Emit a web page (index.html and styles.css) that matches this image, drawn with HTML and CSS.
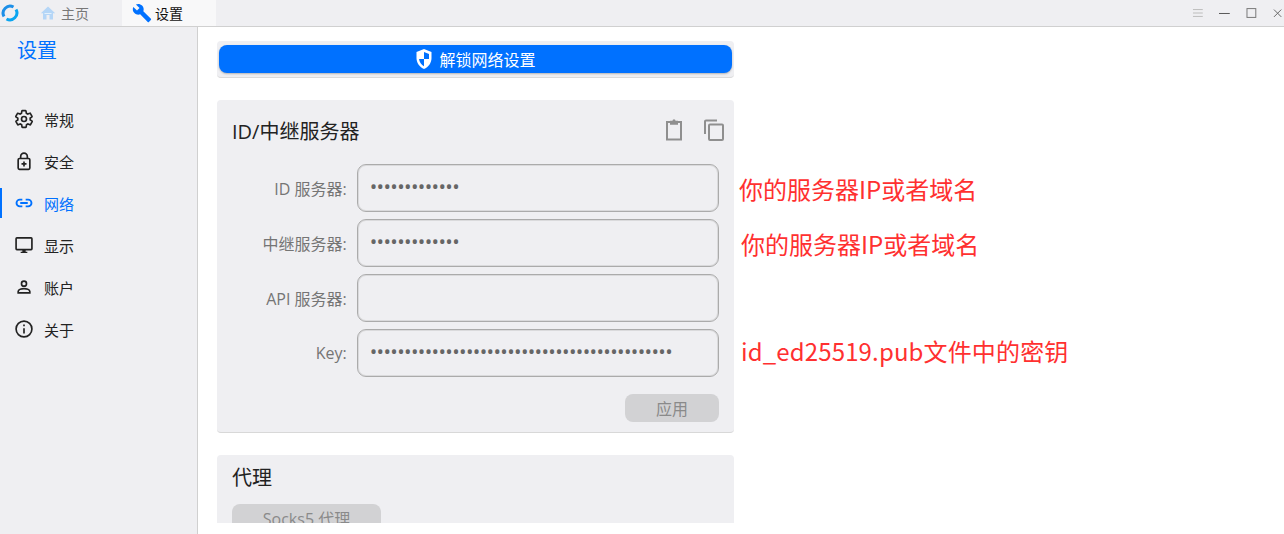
FILE: index.html
```html
<!DOCTYPE html>
<html lang="zh-CN">

<head>
    <meta charset="UTF-8">
    <title>设置</title>
    <link rel="stylesheet" href="styles.css">
</head>

<body>
    <div class="titlebar">
        <svg class="logo" viewBox="0 0 18 18" width="18" height="18">
            <path d="M3 12.500A7 7 0 0 1 12.500 3" fill="none" stroke="#1c8fe8" stroke-width="3"/>
            <path d="M15 5.500A7 7 0 0 1 5.500 15" fill="none" stroke="#0aa5f0" stroke-width="3"/>
        </svg>
        <div class="tab">
            <svg viewBox="0 0 16 16" width="16" height="16">
                <path d="M8 1.500 .8 8.200h2.200V14.500h3.500V10h3v4.500H13V8.200h2.200z" fill="#b5d6f7"/>
                <path d="M4.500 8.500h7" stroke="#e4f0fb" stroke-width="1"/>
            </svg>
            <span>主页</span>
        </div>
        <div class="tab tab-active">
            <svg viewBox="0 0 24 24" width="20" height="20">
                <path d="M22.700 19 13.600 9.900c.9-2.300.4-5-1.500-6.900-2-2-5-2.400-7.400-1.300L9 6 6 9 1.600 4.700C.4 7.100.9 10.100 2.900 12.100c1.900 1.900 4.600 2.400 6.900 1.500l9.100 9.100c.4.400 1 .4 1.400 0l2.300-2.300c.5-.4.5-1.100.1-1.400z" fill="#0071ff"/>
            </svg>
            <span>设置</span>
        </div>
        <div class="window-btns">
            <svg viewBox="0 0 12 12" width="12" height="12"><path d="M1 2.500h10M1 6h10M1 9.500h10" stroke="#bbb" stroke-width="1"/></svg>
            <svg viewBox="0 0 12 12" width="12" height="12"><path d="M0 6.500h11" stroke="#555" stroke-width="1"/></svg>
            <svg viewBox="0 0 12 12" width="12" height="12"><rect x="1" y="1.500" width="9" height="9" fill="none" stroke="#777" stroke-width="1"/></svg>
            <svg viewBox="0 0 12 12" width="12" height="12"><path d="M2 2.500l7.500 7.500M9.500 2.500l-7.500 7.500" stroke="#666" stroke-width="1"/></svg>
        </div>
    </div>

    <div class="layout">
        <div class="sidebar">
            <div class="sidebar-title">设置</div>
            <div class="nav">
                <div class="nav-item">
                    <svg viewBox="0 0 24 24" width="20" height="20"><path d="M19.400 13c.04-.3.1-.7.1-1s0-.7-.1-1l2.100-1.600c.2-.2.200-.4.100-.6l-2-3.500c-.1-.2-.4-.3-.6-.2l-2.500 1c-.5-.4-1.100-.7-1.700-1l-.4-2.700c0-.2-.2-.4-.5-.4h-4c-.2 0-.4.200-.5.400l-.4 2.700c-.6.300-1.200.6-1.700 1l-2.500-1c-.2-.1-.5 0-.6.200l-2 3.500c-.1.200-.1.400.1.600L4.600 11c0 .3-.1.700-.1 1s0 .7.100 1l-2.100 1.600c-.2.200-.2.400-.1.600l2 3.500c.1.200.4.300.6.200l2.500-1c.5.400 1.100.7 1.700 1l.4 2.700c0 .2.300.4.500.4h4c.3 0 .5-.2.500-.4l.4-2.700c.6-.3 1.200-.6 1.700-1l2.500 1c.2.100.5 0 .6-.2l2-3.500c.1-.2.100-.4-.1-.6z" fill="none" stroke="#222" stroke-width="2"/><circle cx="12" cy="12" r="3" fill="none" stroke="#222" stroke-width="2"/></svg>
                    <span>常规</span>
                </div>
                <div class="nav-item">
                    <svg viewBox="0 0 24 24" width="20" height="20"><rect x="5" y="9" width="14" height="13" rx="1.500" fill="none" stroke="#222" stroke-width="2"/><path d="M8 9V6.500a4 4 0 0 1 8 0V9M12 12.500v6M9 15.500h6" fill="none" stroke="#222" stroke-width="2"/></svg>
                    <span>安全</span>
                </div>
                <div class="nav-item nav-active">
                    <svg viewBox="0 0 24 24" width="20" height="20"><path d="M10 8H7a4 4 0 0 0 0 8h3M14 8h3a4 4 0 0 1 0 8h-3M7.500 12h9" fill="none" stroke="#0071ff" stroke-width="2.200"/></svg>
                    <span>网络</span>
                </div>
                <div class="nav-item">
                    <svg viewBox="0 0 24 24" width="22" height="22"><rect x="2.500" y="3.500" width="19" height="14" rx="1" fill="none" stroke="#222" stroke-width="2"/><path d="M10 18h4v2h2v1.500H8V20h2z" fill="#222"/></svg>
                    <span>显示</span>
                </div>
                <div class="nav-item">
                    <svg viewBox="0 0 24 24" width="20" height="20"><circle cx="12" cy="8" r="3" fill="none" stroke="#222" stroke-width="2"/><path d="M5 19v-1.500c0-2.500 4.500-3.500 7-3.500s7 1 7 3.500V19z" fill="none" stroke="#222" stroke-width="2"/></svg>
                    <span>账户</span>
                </div>
                <div class="nav-item">
                    <svg viewBox="0 0 24 24" width="20" height="20"><circle cx="12" cy="12" r="9.500" fill="none" stroke="#222" stroke-width="2"/><path d="M12 11v6.500M12 6.500v2.200" fill="none" stroke="#222" stroke-width="2"/></svg>
                    <span>关于</span>
                </div>
            </div>
        </div>

        <div class="main">
            <div class="scroll">
                <div class="unlock-panel">
                    <div class="unlock-btn">
                        <svg viewBox="0 0 18 22" width="18" height="22"><path d="M9 1 1.500 4v6c0 5 3.200 9.300 7.500 11 4.300-1.700 7.500-6 7.500-11V4z" fill="#fff"/><path d="M9 4v7H4V6zM9 11h5c-.4 3.300-2.400 5.900-5 7.200z" fill="#0071ff" transform="matrix(-1 0 0 1 18 0)"/></svg>
                        <span>解锁网络设置</span>
                    </div>
                </div>

                <div class="card">
                    <div class="card-head">
                        <div class="card-title">ID/中继服务器</div>
                        <div class="card-actions">
                            <svg viewBox="0 0 20 24" width="20" height="24"><path d="M6 4H3v17.500h14V4h-3" fill="none" stroke="#8f8f8f" stroke-width="2"/><path d="M6 2.800h2.500a1.500 1.500 0 0 1 3 0H14v4H6z" fill="#8f8f8f"/></svg>
                            <svg viewBox="0 0 22 24" width="22" height="24"><path d="M2 16V3.500a1 1 0 0 1 1-1h11" fill="none" stroke="#8f8f8f" stroke-width="2"/><rect x="6" y="6.500" width="14" height="15.500" rx="1" fill="none" stroke="#8f8f8f" stroke-width="2"/></svg>
                        </div>
                    </div>
                    <div class="form-row">
                        <label class="form-label">ID 服务器:</label>
                        <div class="form-input">•••••••••••••</div>
                    </div>
                    <div class="form-row">
                        <label class="form-label">中继服务器:</label>
                        <div class="form-input">•••••••••••••</div>
                    </div>
                    <div class="form-row">
                        <label class="form-label">API 服务器:</label>
                        <div class="form-input"></div>
                    </div>
                    <div class="form-row">
                        <label class="form-label">Key:</label>
                        <div class="form-input">••••••••••••••••••••••••••••••••••••••••••••</div>
                    </div>
                    <div class="card-foot">
                        <div class="btn-disabled btn-apply">应用</div>
                    </div>
                </div>

                <div class="card">
                    <div class="card-title card-title-small">代理</div>
                    <div class="btn-disabled btn-socks">Socks5 代理</div>
                </div>
            </div>
        </div>
    </div>

    <div class="note note-id">你的服务器IP或者域名</div>
    <div class="note note-relay">你的服务器IP或者域名</div>
    <div class="note note-key">id_ed25519.pub文件中的密钥</div>
</body>

</html>
```

FILE: styles.css
```css
* {
    box-sizing: border-box;
}

html,
body {
    height: 100%;
}

body {
    margin: 0;
    background-color: #FFFFFF;
    color: #222222;
    font-family: "Open Sans", "Noto Sans CJK SC", sans-serif;
    font-size: 14px;
    overflow: hidden;
    position: relative;
}

.titlebar {
    display: flex;
    align-items: center;
    height: 27px;
    background-color: #EFEFF2;
    border-bottom: 1px solid #D0D0D0;
}

.logo {
    margin-left: 1px;
    margin-right: 21px;
    flex-shrink: 0;
}

.tab {
    display: flex;
    align-items: center;
    gap: 5px;
    width: 82px;
    height: 26px;
    color: #777777;
}

.tab-active {
    width: 94px;
    padding-left: 10px;
    gap: 3px;
    background-color: #F8F8F9;
    color: #111111;
}

.window-btns {
    display: flex;
    align-items: center;
    gap: 15px;
    margin-left: auto;
    width: 92px;
    flex-shrink: 0;
}

.layout {
    display: flex;
    height: 507px;
}

.sidebar {
    width: 198px;
    flex-shrink: 0;
    background-color: #EFEFF2;
    border-right: 1px solid #D0D0D0;
}

.sidebar-title {
    padding: 10px 0 0 17px;
    height: 71px;
    font-size: 20px;
    line-height: 28px;
    color: #0071FF;
}

.nav-item {
    display: flex;
    align-items: center;
    height: 42px;
    padding-left: 14px;
    gap: 10px;
    font-size: 15px;
}

.nav-item svg {
    width: 20px;
    flex-shrink: 0;
}

.nav-active {
    color: #0071FF;
    background: linear-gradient(#0071FF, #0071FF) 0 center / 2px 30px no-repeat;
}

.main {
    flex: 1;
}

.scroll {
    height: 496px;
    width: 536px;
    padding: 14px 0 0 19px;
    overflow: hidden;
}

.unlock-panel {
    width: 517px;
    height: 37px;
    padding: 4px 2px 0;
    background-color: #EFEFF2;
    border-radius: 4px;
    border-bottom: 1px solid #DADADA;
}

.unlock-btn {
    display: flex;
    align-items: center;
    justify-content: center;
    gap: 6px;
    height: 28px;
    padding-bottom: 1px;
    background-color: #0071FF;
    border-radius: 8px;
    box-shadow: 0 1px 2px rgba(0, 0, 0, 0.25);
    color: #FFFFFF;
    font-size: 16px;
}

.card {
    width: 517px;
    margin-top: 22px;
    padding: 0 15px;
    background-color: #EFEFF2;
    border-radius: 4px;
    border-bottom: 1px solid #D8D8D8;
}

.card-head {
    display: flex;
    align-items: center;
    justify-content: space-between;
    height: 64px;
    padding-bottom: 4px;
}

.card-title {
    font-size: 20px;
    color: #222222;
}

.card-title-small {
    padding: 8px 0 12px;
    line-height: 29px;
}

.card-actions {
    display: flex;
    align-items: center;
    gap: 19px;
    margin-right: -6px;
}

.form-row {
    display: flex;
    align-items: center;
    gap: 10px;
    margin-bottom: 7px;
}

.form-label {
    width: 115px;
    text-align: right;
    color: #757575;
    font-size: 16px;
}

.form-input {
    width: 363px;
    height: 48px;
    padding: 0 0 4px 12px;
    border: 1px solid #ABABAB;
    box-shadow: inset 0 0 0 1px #DADADC;
    border-radius: 9px;
    color: #666666;
    font-size: 20px;
    line-height: 44px;
    letter-spacing: -0.65px;
    white-space: nowrap;
    overflow: hidden;
}

.card-foot {
    display: flex;
    justify-content: flex-end;
    padding: 10px 0;
}

.btn-disabled {
    display: flex;
    align-items: center;
    justify-content: center;
    height: 28px;
    background-color: #D2D2D4;
    border-radius: 8px;
    color: #8A8A8A;
    font-size: 16px;
}

.btn-apply {
    width: 94px;
}

.btn-socks {
    width: 149px;
    margin-bottom: 10px;
}

.note {
    position: absolute;
    font-family: "Noto Sans CJK SC", sans-serif;
    font-size: 24px;
    line-height: 32px;
    color: #FF3030;
    white-space: nowrap;
}

.note-id {
    left: 739px;
    top: 173px;
}

.note-relay {
    left: 741px;
    top: 228px;
}

.note-key {
    left: 741px;
    top: 335px;
    letter-spacing: 0.14px;
}
```
